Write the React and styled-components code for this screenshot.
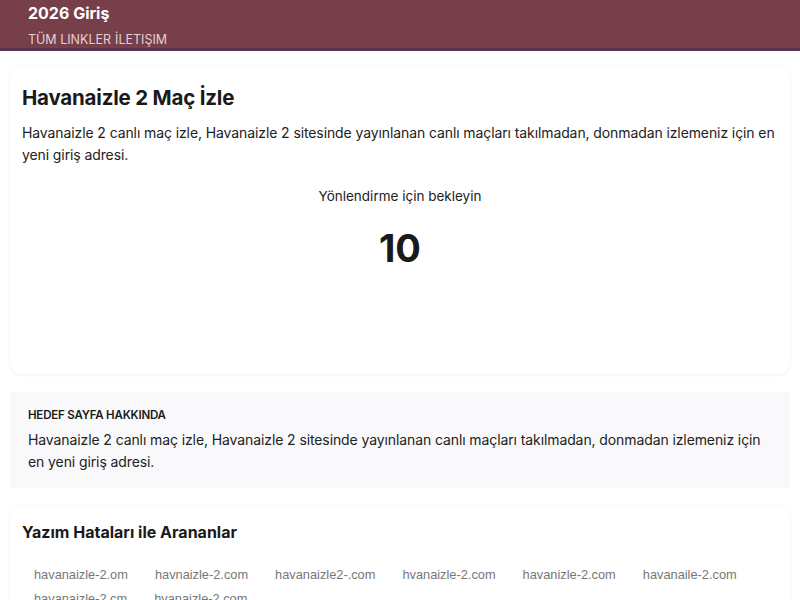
import React from 'react'
import styled, { createGlobalStyle } from 'styled-components'

const Global = createGlobalStyle`
  html, body { margin:0; padding:0; background:#fff; }
  body { font-family: Inter, "Noto Sans", sans-serif; color:#1a1a1a; }
  * { box-sizing:border-box; }
`
const Header = styled.header`
  background:#763f4a; border-bottom:3px solid #59324f; height:51px;
  padding:3px 28px 0;
`
const Brand = styled.div`
  color:#fff; font-weight:700; font-size:16px; line-height:20px;
`
const Nav = styled.nav`
  display:flex; gap:4px; margin-top:9px;
  font-size:12.5px; line-height:16px; color:#e6cfd6;
`
const Main = styled.main`
  padding:15px 10px 0; display:flex; flex-direction:column; gap:18px;
`
const Card = styled.section`
  background:${p => p.$soft ? '#f9f9fb' : '#fff'};
  border-radius:${p => p.$soft ? '4px' : '12px'};
  box-shadow:${p => p.$soft ? 'none' : '0 1px 4px rgba(0,0,0,0.06), 0 0 1px rgba(0,0,0,0.05)'};
  padding:${p => p.$pad || '16px 12px'};
  min-height:${p => p.$min || 'auto'};
`
const Title = styled.h1`
  margin:0 0 8px; font-size:20.5px; line-height:32px; font-weight:700; letter-spacing:-0.2px;
`
const Text = styled.p`
  margin:0; font-size:14px; line-height:22px; color:#222; letter-spacing:-0.1px;
`
const Wait = styled.div`
  text-align:center; margin-top:20px; font-size:13.5px; line-height:20px; color:#222;
`
const Count = styled.div`
  text-align:center; margin-top:20px; font-size:38px; line-height:44px; font-weight:700;
`
const Label = styled.h2`
  margin:0 0 6px; font-size:11.5px; line-height:16px; font-weight:600; text-transform:uppercase; letter-spacing:-0.2px;
`
const SubTitle = styled.h2`
  margin:0 0 22px; font-size:16px; line-height:24px; font-weight:700;
`
const Links = styled.div`
  display:flex; flex-wrap:wrap; row-gap:6px; padding-left:12px;
`
const Chip = styled.a`
  font-family:"Liberation Sans", Arial, sans-serif; font-size:12.8px; line-height:18px;
  color:#777; text-decoration:none; margin-right:27px;
`

const typos = [
  'havanaizle-2.om', 'havnaizle-2.com', 'havanaizle2-.com', 'hvanaizle-2.com',
  'havanizle-2.com', 'havanaile-2.com', 'havanaizle-2.cm', 'hvanaizle-2.com'
]

const desc = 'Havanaizle 2 canlı maç izle, Havanaizle 2 sitesinde yayınlanan canlı maçları takılmadan, donmadan izlemeniz için en yeni giriş adresi.'

export default function App(){
  return (
    <>
      <Global />
      <Header>
        <Brand>2026 Giriş</Brand>
        <Nav><span>TÜM LINKLER</span><span>İLETIŞIM</span></Nav>
      </Header>
      <Main>
        <Card $pad="16px 12px 16px" $min="308px">
          <Title>Havanaizle 2 Maç İzle</Title>
          <Text>{desc}</Text>
          <Wait>Yönlendirme için bekleyin</Wait>
          <Count>10</Count>
        </Card>
        <Card $soft $pad="15px 18px 15px">
          <Label>Hedef Sayfa Hakkında</Label>
          <Text>{desc}</Text>
        </Card>
        <Card $pad="14px 12px 16px">
          <SubTitle>Yazım Hataları ile Arananlar</SubTitle>
          <Links>
            {typos.map((t, i) => <Chip key={i} href="#">{t}</Chip>)}
          </Links>
        </Card>
      </Main>
    </>
  )
}
